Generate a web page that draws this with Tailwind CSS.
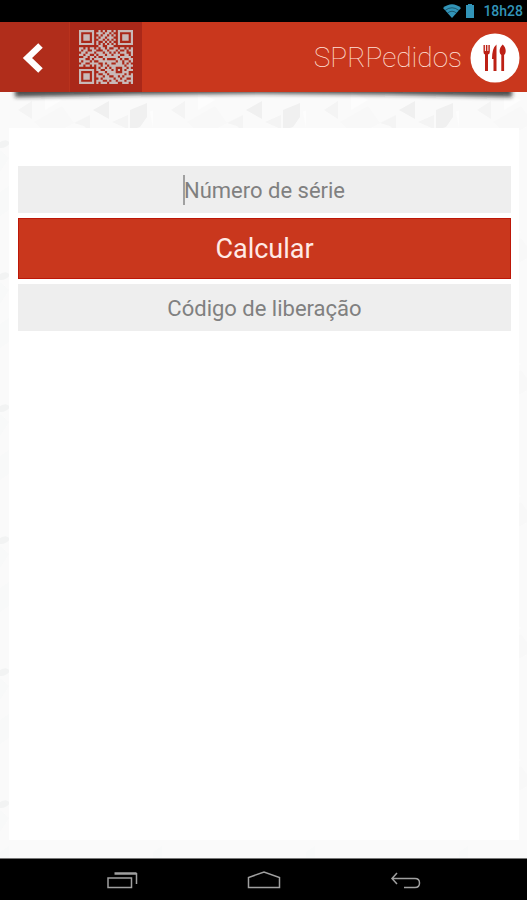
<!DOCTYPE html>
<html lang="pt-BR">
<head>
<meta charset="utf-8">
<meta name="viewport" content="width=device-width, initial-scale=1">
<title>SPRPedidos</title>
<script src="https://cdn.jsdelivr.net/npm/@tailwindcss/browser@4"></script>
</head>
<body class="flex min-h-screen flex-col bg-black font-['Roboto',sans-serif]">
  <div class="flex h-[22px] items-center justify-end gap-1 bg-black pr-1 text-[#3294b8]">
    <svg class="h-[14px] w-[18px]" viewBox="0 0 18 14" aria-label="Wi-Fi"><path d="M0 4Q9-3.500 18 4L9 14Z" fill="currentColor"/><path d="M2 6.500q7-5.500 14 0M4.500 9q4.500-3.500 9 0" fill="none" stroke="#000" stroke-opacity=".5" stroke-width=".8"/></svg>
    <svg class="h-[14px] w-[10px]" viewBox="0 0 10 14" aria-label="Bateria"><path d="M3 0h4v1h2v13H1V1h2z" fill="currentColor"/></svg>
    <time class="pl-1 text-[14px] leading-[22px] font-medium">18h28</time>
  </div>

  <header class="relative z-10 flex h-[70px] items-stretch justify-between bg-[#c9371d]">
    <svg class="absolute top-full left-0 h-[14px] w-full" viewBox="0 0 527 14" preserveAspectRatio="none" aria-hidden="true">
      <defs><filter id="soft" x="-5%" y="-100%" width="110%" height="300%"><feGaussianBlur stdDeviation="2"/></filter></defs>
      <path d="M15-6H512V5Q263-2 15 5Z" fill="#222" fill-opacity=".8" filter="url(#soft)"/>
    </svg>
    <div class="relative flex bg-[#b02d1b]">
      <button type="button" aria-label="Voltar" class="flex w-[70px] items-center justify-center border-r border-[#b9321d] pt-[2px] pr-[3px]">
        <svg class="h-[34px] w-[24px]" viewBox="0 0 24 34" aria-hidden="true"><path d="M19.500 4.500 6.500 17 19.500 29.500" fill="none" stroke="#fff" stroke-width="6.500" stroke-linejoin="miter"/></svg>
      </button>
      <button type="button" aria-label="Ler código QR" class="flex w-[72px] items-center justify-center bg-[#aa2819]">
        <svg class="h-[54px] w-[54px]" viewBox="0 0 25 25" aria-hidden="true"><path id="qr" fill="#c9b9b8"/></svg>
      </button>
    </div>
    <div class="relative flex items-center gap-2 pt-[2px] pr-[7px]">
      <h1 class="text-[28px] leading-[36px] font-thin text-[#ffe0d8]">SPRPedidos</h1>
      <svg class="size-[50px]" viewBox="0 0 50 50" aria-hidden="true">
        <circle cx="25" cy="25" r="24.500" fill="#fff"/>
        <g fill="#bd2015">
          <path d="M13.500 12h1.400v6h1v-6h1.500v6h1v-6h1.400v7q0 2-1.800 2.500V38h-3V21.500q-1.500-.5-1.500-2.500z"/>
          <path d="M26.500 11.500V38h-3V26h-1.500q0-11 4.500-14.500z"/>
          <path d="M32.700 11.500c2 1.800 3 4 3 6.500 0 2-.7 3.300-1.600 4V38h-2.800V22c-1-.7-1.700-2-1.700-4 0-2.500 1.200-4.700 3.100-6.500z"/>
        </g>
      </svg>
    </div>
  </header>

  <main class="relative isolate flex flex-1 flex-col bg-[#fafafa] pt-[36px] pr-[8px] pb-[18px] pl-[9px]">
    <svg class="absolute inset-0 -z-10 size-full" aria-hidden="true">
      <defs>
        <pattern id="facets" width="153" height="132" patternUnits="userSpaceOnUse">
          <path d="M18 18 32 9V27ZM74 31 90 23V40L84 34ZM112 30 128 23V37Z" fill="#f4f4f4"/>
          <path d="M93 18 109 9V27ZM130 18 147 11V25L140 35 130 38Z" fill="#f0f0f0"/>
          <path d="M34 30 62 14 74 31 50 44Z" fill="#f8f8f8"/>
          <path d="M0 58 9 66 0 80ZM0 100 9 94V118L0 124Z" fill="#f8f9f9"/>
          <path d="M0 50q7-4 10 1-3 5-10 5z" fill="#f2f3f3"/>
          <path d="M45 0 62 8 45 18ZM150 20 153 18V36Z" fill="#fdfdfd"/>
        </pattern>
      </defs>
      <rect width="100%" height="100%" fill="url(#facets)"/>
    </svg>
    <form class="flex flex-1 flex-col gap-[5px] bg-white pt-[38px] pr-[8px] pl-[9px]" onsubmit="return false">
      <label class="relative block">
        <input id="serial" type="text" aria-label="Número de série" placeholder="Número de série" class="block h-[47px] w-full bg-[#eeeeee] pt-[2px] text-center text-[22px] text-[#555] outline-none placeholder:text-[#808080]">
        <span class="absolute top-[9px] left-[calc(50%-82px)] h-[30px] w-[2px] bg-[#a0a0a0]" aria-hidden="true"></span>
      </label>
      <button type="submit" class="h-[61px] w-full border border-[#bd1708] bg-[#c9371d] pt-[2px] text-[27px] text-[#ffeae6]">Calcular</button>
      <label class="block">
        <input id="release" type="text" aria-label="Código de liberação" placeholder="Código de liberação" class="block h-[47px] w-full bg-[#eeeeee] pt-[2px] text-center text-[22px] text-[#555] outline-none placeholder:text-[#808080]">
      </label>
    </form>
  </main>

  <nav class="flex h-[42px] items-center justify-center gap-[108px] border-t border-[#777] bg-black pt-[1px]" aria-label="Sistema">
    <button type="button" aria-label="Recentes"><svg class="h-[20px] w-[34px]" viewBox="0 0 34 20" fill="none" stroke="#a0a0a0" aria-hidden="true"><path d="M3 8H26.500V17.500H3Z" stroke-width="1.500"/><path d="M9.500 3.500H31.500" stroke-width="2.500"/><path d="M31.500 3V14" stroke-width="1.500"/></svg></button>
    <button type="button" aria-label="Início"><svg class="h-[20px] w-[34px]" viewBox="0 0 34 20" fill="none" stroke="#a0a0a0" stroke-width="1.500" aria-hidden="true"><path d="M1.500 17.500V7.500L17 2 32.500 7.500V17.500Z"/></svg></button>
    <button type="button" aria-label="Voltar ao anterior"><svg class="h-[20px] w-[34px]" viewBox="0 0 34 20" fill="none" stroke="#a0a0a0" stroke-width="1.500" aria-hidden="true"><path d="M8 3 3 8.500 8 14M3 8.500H26Q30.500 8.500 30.500 13T26 17.500H15"/></svg></button>
  </nav>

  <script>
    const modules = [
      "1111111001010110101111111",
      "1000001011101101001000001",
      "1011101001011010101011101",
      "1011101010110111001011101",
      "1011101001101010101011101",
      "1000001010010101001000001",
      "1111111010101010101111111",
      "0000000001100111000000000",
      "1101011010110100110110101",
      "1011001100011011101001011",
      "0110111011101101010111001",
      "1101100101110110111001101",
      "0011011010011111110111110",
      "1110010111101000011010011",
      "1011101001111111101101101",
      "0110011110010110011101010",
      "1101101011011011111110111",
      "0000000010110101100011010",
      "1111111011001110101010111",
      "1000001001110111100011100",
      "1011101010011011111110101",
      "1011101011101100110101111",
      "1011101001011111011011001",
      "1000001011100101101110111",
      "1111111010111011110011101"
    ];
    let d = "";
    modules.forEach((row, y) => [...row].forEach((c, x) => { if (c === "1") d += `M${x} ${y}h1v1h-1z`; }));
    document.getElementById("qr").setAttribute("d", d);
  </script>
</body>
</html>
